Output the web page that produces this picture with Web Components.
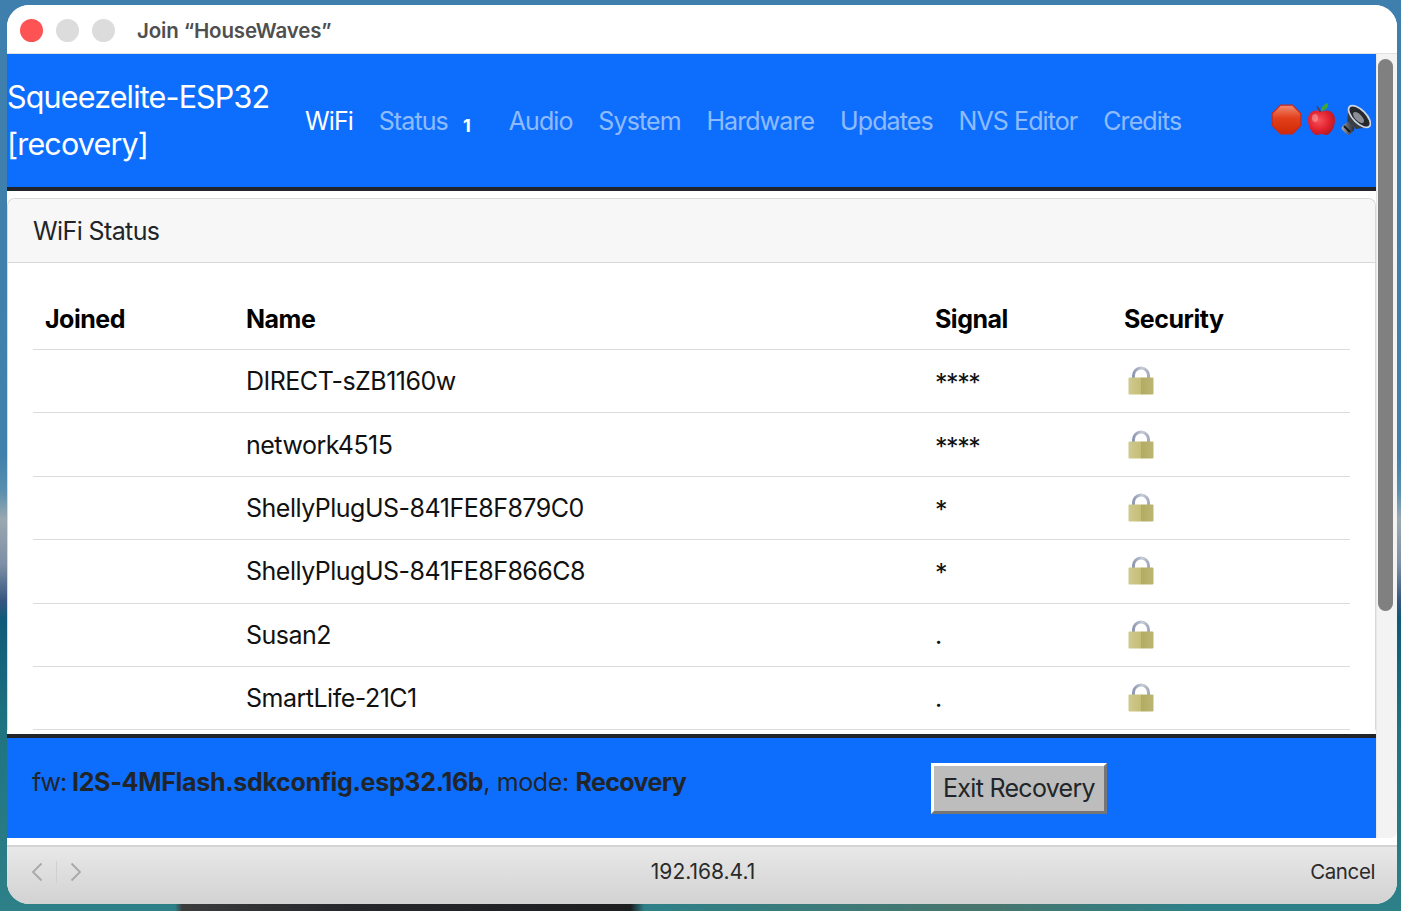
<!DOCTYPE html>
<html>
<head>
<meta charset="utf-8">
<title>Join HouseWaves</title>
<style>
html, body { margin: 0; padding: 0; height: 100%; overflow: hidden; }
body { font-family: Inter, "Liberation Sans", Arial, sans-serif; }
</style>
</head>
<body>
<desktop-frame>
  <captive-window>
    <title-bar slot="title" label="Join “HouseWaves”"></title-bar>
    <nav-bar slot="nav"></nav-bar>
    <wifi-card slot="content">
      <wifi-row name="DIRECT-sZB1160w" signal="****"></wifi-row>
      <wifi-row name="network4515" signal="****"></wifi-row>
      <wifi-row name="ShellyPlugUS-841FE8F879C0" signal="*"></wifi-row>
      <wifi-row name="ShellyPlugUS-841FE8F866C8" signal="*"></wifi-row>
      <wifi-row name="Susan2" signal="."></wifi-row>
      <wifi-row name="SmartLife-21C1" signal="."></wifi-row>
    </wifi-card>
    <app-footer slot="footer"></app-footer>
    <browser-bar slot="bar" address="192.168.4.1"></browser-bar>
  </captive-window>
</desktop-frame>

<script>
class desktop_frame extends HTMLElement {
    constructor() {
        super();
        this.attachShadow({ mode: 'open' });
        this.shadowRoot.innerHTML = `
        <style>
        :host {
            display: block;
            box-sizing: border-box;
            width: 1401px;
            height: 911px;
            padding: 5px 4px 7px 7px;
            background:
                linear-gradient(90deg, rgba(30,30,30,0) 12.5%, #3a3c3c 13%, #24282a 25%, #1c1f20 45%, rgba(20,30,35,0) 46%, rgba(90,110,90,.6) 70%, rgba(30,90,100,0) 85%) 0 100% / 100% 7px no-repeat,
                linear-gradient(180deg, #3f7fae 0, #3f80ac 50%, #5a90ae 54%, #9aa8b0 57%, #7d8fa5 62%, #35557f 66%, #0e5a78 68%, #1f7480 80%, #2e8088 100%);
        }
        </style>
        <slot></slot>`;
    }
}
customElements.define('desktop-frame', desktop_frame);

class captive_window extends HTMLElement {
    constructor() {
        super();
        this.attachShadow({ mode: 'open' });
        this.shadowRoot.innerHTML = `
        <style>
        :host {
            display: flex;
            flex-direction: column;
            height: 100%;
            background: #fff;
            border-radius: 22px;
            overflow: hidden;
        }
        .page {
            flex: 1;
            min-height: 0;
            display: flex;
        }
        .view {
            flex: 1;
            min-width: 0;
            display: flex;
            flex-direction: column;
        }
        .scroll {
            flex: 1;
            min-height: 0;
            overflow: hidden;
            padding-top: 7px;
            background: #fff;
        }
        .track {
            width: 21px;
            box-sizing: border-box;
            padding: 5px 4px 0 1px;
            background: #f3f3f3;
            border-left: 1px solid #e8e8e8;
            margin-bottom: 7px;
            border-radius: 0 0 6px 0;
        }
        .thumb {
            height: 552px;
            background: #808080;
            border-radius: 8px;
        }
        .gap { height: 7px; }
        </style>
        <slot name="title"></slot>
        <div class="page">
            <div class="view">
                <slot name="nav"></slot>
                <div class="scroll"><slot name="content"></slot></div>
                <slot name="footer"></slot>
                <div class="gap"></div>
            </div>
            <div class="track"><div class="thumb"></div></div>
        </div>
        <slot name="bar"></slot>`;
    }
}
customElements.define('captive-window', captive_window);

class title_bar extends HTMLElement {
    constructor() {
        super();
        this.attachShadow({ mode: 'open' });
        this.shadowRoot.innerHTML = `
        <style>
        :host {
            display: flex;
            align-items: center;
            flex: none;
            box-sizing: border-box;
            height: 49px;
            padding: 2px 0 0 13px;
            background: #fff;
            border-bottom: 1px solid #e2e2e2;
        }
        i {
            display: block;
            width: 23px;
            height: 23px;
            border-radius: 50%;
            background: #dcdcdc;
            margin-right: 13px;
        }
        i.close { background: #fd5354; }
        span {
            margin-left: 9px;
            font: 600 20.5px Inter, "Liberation Sans", sans-serif;
            letter-spacing: -0.15px;
            color: #4f4f4f;
        }
        </style>
        <i class="close"></i><i></i><i></i>
        <span>${this.getAttribute('label')}</span>`;
    }
}
customElements.define('title-bar', title_bar);

class nav_bar extends HTMLElement {
    constructor() {
        super();
        this.attachShadow({ mode: 'open' });
        this.shadowRoot.innerHTML = `
        <style>
        :host {
            display: flex;
            align-items: center;
            flex: none;
            height: 133px;
            background: #0d6efd;
            border-bottom: 4px solid #212529;
            font-family: Inter, "Liberation Sans", sans-serif;
        }
        .brand {
            width: 287px;
            flex: none;
            font-size: 30.5px;
            letter-spacing: -0.85px;
            line-height: 47px;
            color: #fff;
            margin-top: -2px;
        }
        ul {
            display: flex;
            align-items: center;
            flex: 1;
            list-style: none;
            margin: 0;
            padding: 0 0 0 11px;
            font-size: 25px;
            letter-spacing: -0.9px;
            gap: 25.8px;
            color: rgba(255,255,255,.55);
        }
        .on { color: #fff; }
        .badge {
            font-size: 18px;
            font-weight: 700;
            color: #fff;
            margin-left: 9px;
            margin-right: 13px;
            position: relative;
            top: 2px;
        }
        .icons {
            display: flex;
            align-items: center;
            gap: 4px;
            padding-right: 5px;
            margin-top: -2px;
        }
        svg { display: block; }
        </style>
        <div class="brand">Squeezelite-ESP32<br>[recovery]</div>
        <ul>
            <li class="on">WiFi</li>
            <li>Status <span class="badge">1</span></li>
            <li>Audio</li>
            <li>System</li>
            <li>Hardware</li>
            <li>Updates</li>
            <li>NVS Editor</li>
            <li>Credits</li>
        </ul>
        <div class="icons">
            <svg width="31" height="31" viewBox="0 0 31 31">
                <defs><linearGradient id="st" x1="0" y1="0" x2="0" y2="1">
                    <stop offset="0" stop-color="#f08a70"/><stop offset=".45" stop-color="#e2401c"/><stop offset="1" stop-color="#d02a05"/>
                </linearGradient></defs>
                <path d="M9.5 1.2h12l8.3 8.3v12l-8.3 8.3h-12l-8.3-8.3v-12z" fill="url(#st)" stroke="#c92a1a" stroke-width="1.2"/>
            </svg>
            <svg width="31" height="33" viewBox="0 0 31 33">
                <defs><radialGradient id="ap" cx=".4" cy=".4" r=".7">
                    <stop offset="0" stop-color="#f7525a"/><stop offset=".6" stop-color="#e0202c"/><stop offset="1" stop-color="#a81828"/>
                </radialGradient></defs>
                <path d="M15.5 9C11 6 2 7 2 17c0 8 5 15 9 15 2 0 3-1 4.500-1s2.500 1 4.500 1c4 0 9-7 9-15 0-10-9-11-13.500-8z" fill="url(#ap)"/>
                <path d="M11 3.500L14.500 9" stroke="#5a3a3a" stroke-width="1.4" fill="none"/>
                <path d="M15 8C15 4 18 1 22 0c1 4-2 7-7 8z" fill="#3fa535"/>
                <ellipse cx="9" cy="15" rx="3" ry="4" fill="#fff" opacity=".3"/>
            </svg>
            <svg width="30" height="31" viewBox="0 0 30 31">
                <defs><linearGradient id="sp" x1="0" y1="0" x2="1" y2="1">
                    <stop offset="0" stop-color="#b8bcc0"/><stop offset=".5" stop-color="#5a5e64"/><stop offset="1" stop-color="#222428"/>
                </linearGradient></defs>
                <rect x="2" y="19" width="10" height="11" rx="3" transform="rotate(-45 7 24.500)" fill="url(#sp)"/>
                <path d="M8 3l21 20-14 2-9-8z" fill="#3a3d42"/>
                <ellipse cx="18.500" cy="12.500" rx="6.500" ry="14" transform="rotate(-45 18.500 12.500)" fill="#26282c" stroke="#ccd6e6" stroke-width="1.800"/>
                <ellipse cx="17.500" cy="13.500" rx="3.300" ry="7" transform="rotate(-45 17.500 13.500)" fill="#8b8f95"/>
                <path d="M3 22l6 6" stroke="#17181a" stroke-width="2"/>
            </svg>
        </div>`;
    }
}
customElements.define('nav-bar', nav_bar);

class wifi_card extends HTMLElement {
    constructor() {
        super();
        this.attachShadow({ mode: 'open' });
        this.shadowRoot.innerHTML = `
        <style>
        :host {
            display: block;
            font-family: Inter, "Liberation Sans", sans-serif;
            color: #111;
            font-size: 25px;
            letter-spacing: -0.5px;
        }
        .card {
            border: 1px solid #d8d8d8;
            border-bottom: 0;
            border-radius: 8px 8px 0 0;
        }
        .head {
            box-sizing: border-box;
            height: 64px;
            padding: 0 25px;
            display: flex;
            align-items: center;
            background: #f7f7f7;
            border-bottom: 1px solid #d8d8d8;
            border-radius: 8px 8px 0 0;
            color: #212529;
            letter-spacing: -0.6px;
        }
        .body { padding: 25px 25px 0; }
        .cols {
            display: grid;
            grid-template-columns: 201px 689px 189px 1fr;
            align-items: center;
            height: 62px;
            padding-left: 12px;
            font-weight: 700;
            color: #000;
            border-bottom: 1px solid #dcdcdc;
            box-sizing: border-box;
        }
        </style>
        <div class="card">
            <div class="head">WiFi Status</div>
            <div class="body">
                <div class="cols"><span>Joined</span><span>Name</span><span>Signal</span><span>Security</span></div>
                <slot></slot>
            </div>
        </div>`;
    }
}
customElements.define('wifi-card', wifi_card);

class wifi_row extends HTMLElement {
    constructor() {
        super();
        this.attachShadow({ mode: 'open' });
        const signal = this.getAttribute('signal');
        this.shadowRoot.innerHTML = `
        <style>
        :host {
            display: grid;
            grid-template-columns: 201px 689px 189px 1fr;
            align-items: center;
            box-sizing: border-box;
            height: 63.4px;
            padding-left: 12px;
            border-bottom: 1px solid #dcdcdc;
        }
        .stars { letter-spacing: -1.4px; padding-top: 4px; }
        svg { display: block; margin: -2px 0 0 4px; }
        </style>
        <span></span>
        <span>${this.getAttribute('name')}</span>
        <span class="${signal.includes('*') ? 'stars' : ''}">${signal}</span>
        <svg width="26" height="30" viewBox="0 0 26 30">
            <defs><linearGradient id="lk" x1="0" y1="0" x2="1" y2="0">
                <stop offset="0" stop-color="#d0ca8e"/><stop offset=".5" stop-color="#c4bd78"/><stop offset=".52" stop-color="#b2ab62"/><stop offset="1" stop-color="#bdb674"/>
            </linearGradient>
            <linearGradient id="sk" x1="0" y1="0" x2="1" y2="0">
                <stop offset="0" stop-color="#8e98b2"/><stop offset=".6" stop-color="#c6ccd8"/><stop offset="1" stop-color="#a4abbd"/>
            </linearGradient></defs>
            <path d="M5.500 14V10.500a7.500 7.500 0 0 1 15 0V14" fill="none" stroke="url(#sk)" stroke-width="3"/>
            <rect x="0.500" y="12.500" width="25" height="17" rx="1" fill="url(#lk)"/>
        </svg>`;
    }
}
customElements.define('wifi-row', wifi_row);

class app_footer extends HTMLElement {
    constructor() {
        super();
        this.attachShadow({ mode: 'open' });
        this.shadowRoot.innerHTML = `
        <style>
        :host {
            display: flex;
            flex: none;
            box-sizing: border-box;
            height: 104px;
            padding: 25px 0 0 25px;
            background: #0d6efd;
            border-top: 4px solid #212529;
            font-family: Inter, "Liberation Sans", sans-serif;
            font-size: 25px;
            letter-spacing: -0.4px;
            color: #212529;
        }
        .ver { width: 899px; flex: none; line-height: 40px; margin-top: -1px; height: 40px; }
        .fw { letter-spacing: -1px; margin-right: -1px; }
        b { letter-spacing: -0.3px; }
        b.mode { letter-spacing: -0.6px; }
        button {
            box-sizing: border-box;
            width: 176px;
            height: 51px;
            font: 25px Inter, "Liberation Sans", sans-serif;
            letter-spacing: -0.7px;
            color: #212529;
            background: #bdbdbd;
            border: 3px solid;
            border-color: #fff #767676 #767676 #fff;
            padding: 0 0 2px;
        }
        </style>
        <div class="ver"><span class="fw">fw:</span> <b>I2S-4MFlash.sdkconfig.esp32.16b</b>, mode: <b class="mode">Recovery</b></div>
        <button>Exit Recovery</button>`;
    }
}
customElements.define('app-footer', app_footer);

class browser_bar extends HTMLElement {
    constructor() {
        super();
        this.attachShadow({ mode: 'open' });
        this.shadowRoot.innerHTML = `
        <style>
        :host {
            display: grid;
            grid-template-columns: 1fr auto 1fr;
            align-items: center;
            flex: none;
            box-sizing: border-box;
            height: 59px;
            padding: 0 22px 8px 24px;
            background: linear-gradient(180deg, #e8e8e8, #d2d2d2);
            border-top: 2px solid #d4d4d4;
            font: 21px Inter, "Liberation Sans", sans-serif;
            color: #2a2a2a;
        }
        .arrows { display: flex; align-items: center; gap: 13px; }
        .arrows i { display: block; width: 1px; height: 22px; background: #d0d0d0; }
        svg { display: block; }
        .cancel { justify-self: end; font-size: 20.5px; letter-spacing: -0.4px; }
        </style>
        <div class="arrows">
            <svg width="12" height="20" viewBox="0 0 12 20"><path d="M10.500 1.500L2 10l8.500 8.500" fill="none" stroke="#a8a8a8" stroke-width="1.800"/></svg>
            <i></i>
            <svg width="12" height="20" viewBox="0 0 12 20"><path d="M1.500 1.500L10 10l-8.500 8.500" fill="none" stroke="#a8a8a8" stroke-width="1.800"/></svg>
        </div>
        <div>${this.getAttribute('address')}</div>
        <div class="cancel">Cancel</div>`;
    }
}
customElements.define('browser-bar', browser_bar);
</script>
</body>
</html>
